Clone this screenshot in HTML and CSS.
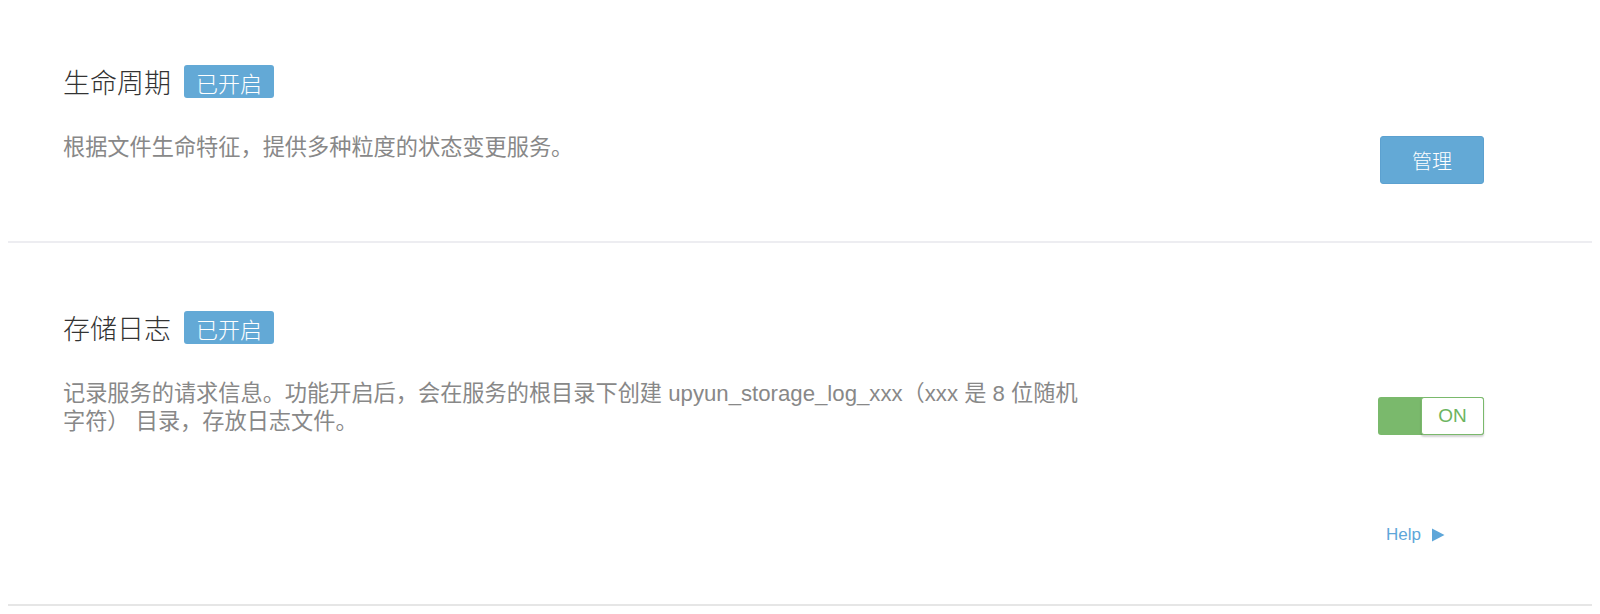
FILE: index.html
```html
<!DOCTYPE html>
<html lang="zh-CN">
<head>
    <meta charset="UTF-8">
    <meta name="viewport" content="width=device-width, initial-scale=1.0">
    <title>存储设置</title>
    <link rel="stylesheet" href="styles.css">
</head>
<body>
    <div class="page">
        <div class="feature feature-first">
            <div class="feature-head">
                <h2 class="feature-title">生命周期</h2>
                <span class="badge">已开启</span>
            </div>
            <div class="feature-body">
                <p class="feature-desc">根据文件生命特征，提供多种粒度的状态变更服务。</p>
                <div class="feature-action">
                    <button class="btn-manage">管理</button>
                </div>
            </div>
        </div>

        <div class="feature feature-second">
            <div class="feature-head">
                <h2 class="feature-title">存储日志</h2>
                <span class="badge">已开启</span>
            </div>
            <div class="feature-body">
                <p class="feature-desc">记录服务的请求信息。功能开启后，会在服务的根目录下创建 upyun_storage_log_xxx（xxx 是 8 位随机字符） 目录，存放日志文件。</p>
                <div class="feature-action">
                    <div class="toggle">
                        <span class="toggle-track"></span>
                        <span class="toggle-knob">ON</span>
                    </div>
                    <a class="help-link" href="#">Help
                        <svg width="14" height="14" viewBox="0 0 14 14"><path d="M1 0.5 L13.5 7 L1 13.5 Z" fill="#5ea6d9"/></svg>
                    </a>
                </div>
            </div>
        </div>
    </div>
</body>
</html>
```

FILE: styles.css
```css
body {
    margin: 0;
    background-color: #fff;
    font-family: "Liberation Sans", "Noto Sans CJK SC", sans-serif;
}

.page {
    padding: 0 8px;
}

.feature {
    padding: 0 108px 0 55px;
    border-bottom: 2px solid #ededf1;
}

.feature-first {
    padding-top: 65px;
    padding-bottom: 57px;
}

.feature-second {
    padding-top: 68px;
    padding-bottom: 59px;
    border-bottom-color: #e6e6e6;
}

.feature-head {
    display: flex;
    align-items: center;
    gap: 13px;
    height: 33px;
}

.feature-title {
    margin: 0;
    font-size: 27px;
    font-weight: 300;
    color: #333;
}

.badge {
    display: inline-flex;
    align-items: center;
    height: 33px;
    padding: 0 12px;
    background-color: #63a9d6;
    color: #fff;
    font-size: 22px;
    font-weight: 300;
    border-radius: 3px;
    box-sizing: border-box;
}

.feature-body {
    display: grid;
    grid-template-columns: 1fr 106px;
    margin-top: 36px;
}

.feature-desc {
    margin: 0;
    max-width: 1022px;
    font-size: 22.2px;
    line-height: 28px;
    color: #888;
}

.feature-action {
    display: flex;
    flex-direction: column;
}

.btn-manage {
    margin-top: 2px;
    margin-left: 2px;
    width: 104px;
    height: 48px;
    background-color: #63a9d6;
    border: 1px solid #5ca1d0;
    border-radius: 3px;
    color: #fff;
    font-family: inherit;
    font-size: 20px;
    font-weight: 300;
    cursor: pointer;
}

.toggle {
    display: flex;
    margin-top: 17px;
    width: 106px;
    height: 38px;
    background-color: #7ab96c;
    border-radius: 3px;
}

.toggle-track {
    width: 43px;
}

.toggle-knob {
    display: flex;
    align-items: center;
    justify-content: center;
    flex: 1;
    background-color: #fff;
    border: 1px solid #7ab96c;
    border-radius: 3px;
    box-shadow: 0 2px 2px rgba(0, 0, 0, 0.18);
    color: #6cb460;
    font-size: 19px;
}

.help-link {
    display: flex;
    align-items: center;
    gap: 10px;
    margin-top: 90px;
    margin-left: 8px;
    color: #5ea6d9;
    font-size: 17px;
    line-height: 20px;
    text-decoration: none;
}
```
